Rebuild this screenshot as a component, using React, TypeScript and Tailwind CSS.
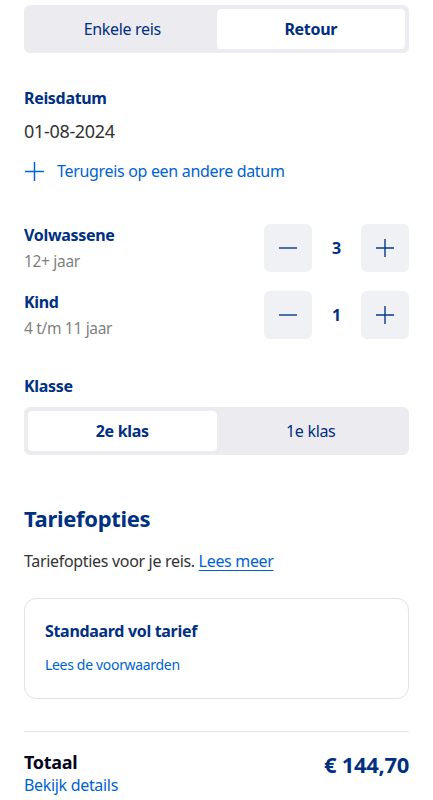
import React from "react";

const Minus = () => (
  <svg width="20" height="20" viewBox="0 0 20 20" fill="none">
    <path d="M1 10h18" stroke="#0a3a8a" strokeWidth="1.4" />
  </svg>
);
const Plus = ({ color = "#0a3a8a", size = 20 }: { color?: string; size?: number }) => (
  <svg width={size} height={size} viewBox="0 0 20 20" fill="none">
    <path d="M1 10h18M10 1v18" stroke={color} strokeWidth="1.4" />
  </svg>
);

const Counter = ({ label, sub, value }: { label: string; sub: string; value: string }) => (
  <div className="flex items-center justify-between">
    <div className="flex flex-col">
      <span className="text-[16px] font-bold text-[#003082] leading-[22px]">{label}</span>
      <span className="text-[15.5px] text-[#7f7f7f] leading-[22px] mt-[4px]">{sub}</span>
    </div>
    <div className="flex items-center">
      <button className="w-[48px] h-[48px] rounded-[6px] bg-[#f0f1f4] flex items-center justify-center">
        <Minus />
      </button>
      <span className="w-[49px] text-center text-[16px] font-bold text-[#003082]">{value}</span>
      <button className="w-[48px] h-[48px] rounded-[6px] bg-[#f0f1f4] flex items-center justify-center">
        <Plus />
      </button>
    </div>
  </div>
);

export default function App() {
  return (
    <div className="w-[433px] h-[800px] bg-white overflow-hidden px-[24px] tracking-[-0.02em]" style={{ fontFamily: '"Noto Sans", "Open Sans", sans-serif' }}>
      <div className="mt-[5px] h-[48px] rounded-[6px] bg-[#ebebf0] p-[4px] flex">
        <div className="flex-1 flex items-center justify-center text-[16px] text-[#003082]">Enkele reis</div>
        <div className="flex-1 flex items-center justify-center text-[16px] font-bold text-[#003082] bg-white rounded-[4px]">Retour</div>
      </div>

      <div className="mt-[34px] text-[16px] font-bold text-[#003082] leading-[22px]">Reisdatum</div>
      <div className="mt-[10px] text-[18px] text-[#333333] leading-[24px]">01-08-2024</div>
      <div className="mt-[17px] flex items-center gap-[12px] text-[16px] text-[#0063d3] leading-[22px]">
        <Plus color="#0063d3" size={21} />
        <span>Terugreis op een andere datum</span>
      </div>

      <div className="mt-[42px]">
        <Counter label="Volwassene" sub="12+ jaar" value="3" />
      </div>
      <div className="mt-[19px]">
        <Counter label="Kind" sub="4 t/m 11 jaar" value="1" />
      </div>

      <div className="mt-[36px] text-[16px] font-bold text-[#003082] leading-[22px]">Klasse</div>
      <div className="mt-[10px] h-[48px] rounded-[6px] bg-[#ebebf0] p-[4px] flex">
        <div className="flex-1 flex items-center justify-center text-[16px] font-bold text-[#003082] bg-white rounded-[4px]">2e klas</div>
        <div className="flex-1 flex items-center justify-center text-[16px] text-[#003082]">1e klas</div>
      </div>

      <div className="mt-[48px] text-[22px] font-bold text-[#003082] leading-[30px]">Tariefopties</div>
      <div className="mt-[17px] text-[16px] text-[#333333] leading-[22px]">
        Tariefopties voor je reis. <span className="text-[#0063d3] underline underline-offset-[3px]">Lees meer</span>
      </div>

      <div className="mt-[26px] h-[101px] rounded-[12px] border border-[#e2e2e6] px-[20px] pt-[21px]">
        <div className="text-[16px] font-bold text-[#003082] leading-[22px]">Standaard vol tarief</div>
        <div className="mt-[13px] text-[14px] text-[#0063d3] leading-[20px]">Lees de voorwaarden</div>
      </div>

      <div className="mt-[32px] h-px bg-[#e6e6ea]" />

      <div className="mt-[18px] flex items-start justify-between">
        <div className="flex flex-col">
          <span className="text-[18px] font-bold text-[#070721] leading-[24px]">Totaal</span>
          <span className="text-[16px] text-[#0063d3] leading-[22px]">Bekijk details</span>
        </div>
        <span className="text-[22px] font-bold text-[#003082] leading-[28px]">€ 144,70</span>
      </div>
    </div>
  );
}
